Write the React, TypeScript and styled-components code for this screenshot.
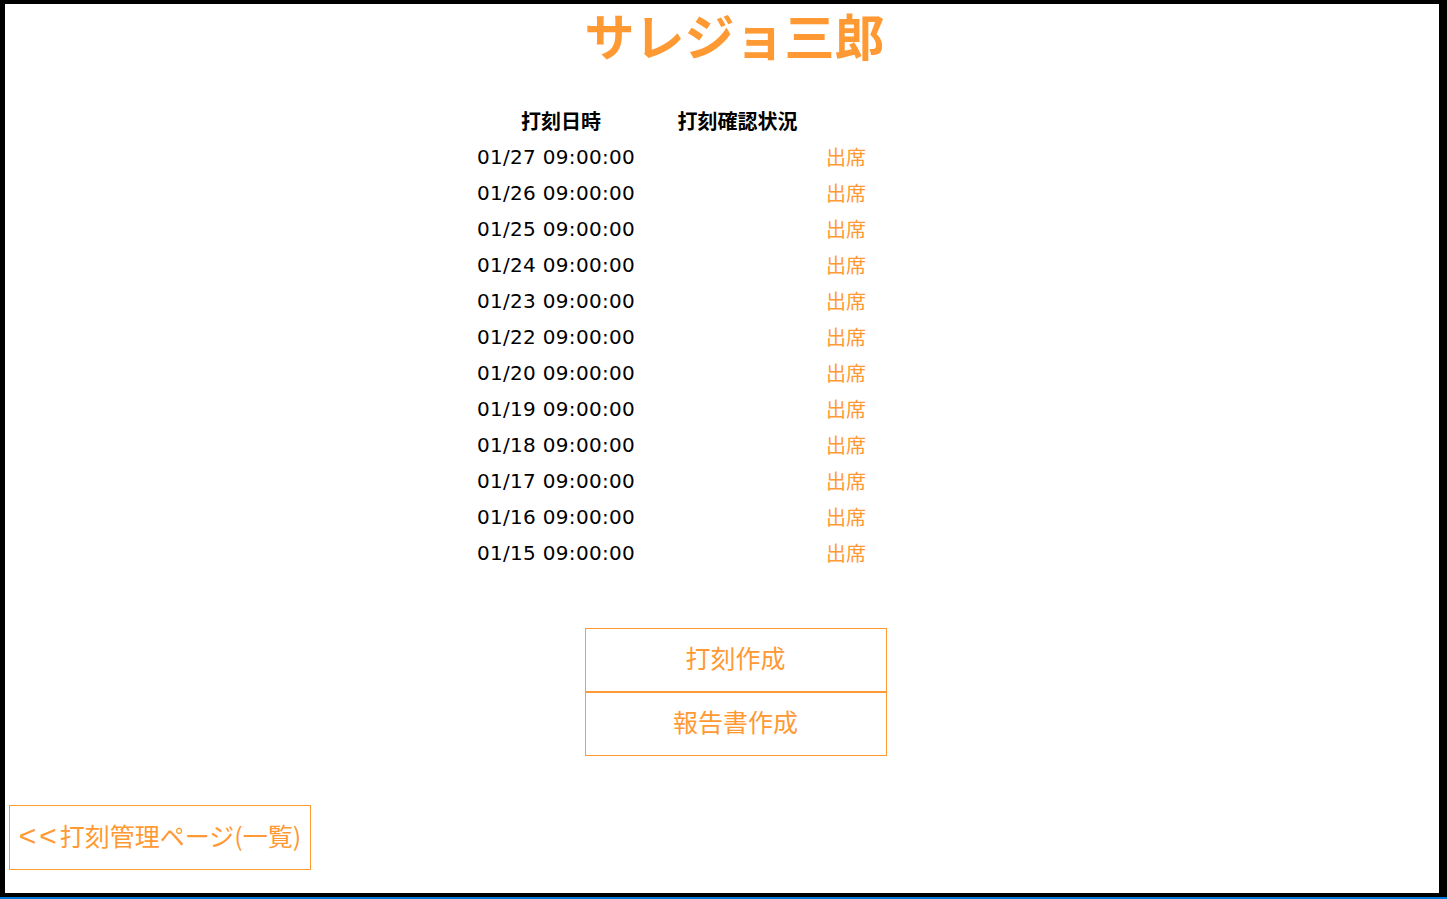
import React from "react";
import styled, { createGlobalStyle } from "styled-components";

const ORANGE = "#ff9933";

const Global = createGlobalStyle`
  html, body { margin: 0; padding: 0; background: #000; }
  body { font-family: "DejaVu Sans", "Noto Sans CJK JP", sans-serif; overflow: hidden; }
`;

const Frame = styled.div`
  width: 1447px;
  height: 899px;
  box-sizing: border-box;
  background: #000;
  display: flex;
  flex-direction: column;
  border-bottom: 2px solid #0078d7;
`;

const Screen = styled.div`
  flex: 1;
  margin: 4px 8px 4px 5px;
  background: #fff;
  display: flex;
  flex-direction: column;
`;

const Main = styled.main`
  display: flex;
  flex-direction: column;
  align-items: center;
  padding-left: 27px;
`;

const Title = styled.h1`
  margin: 0;
  height: 66px;
  line-height: 60px;
  font-family: "Noto Sans CJK JP", sans-serif;
  font-weight: 700;
  font-size: 50px;
  color: ${ORANGE};
  padding-right: 2px;
`;

const Table = styled.div`
  margin-top: 33px;
  display: grid;
  grid-template-columns: 188px 221px 128px;
  grid-auto-rows: 36px;
  align-items: center;
`;

const Head = styled.div<{ $padRight?: number }>`
  font-family: "Noto Sans CJK JP", sans-serif;
  font-weight: 700;
  font-size: 20px;
  color: #000;
  text-align: center;
  padding-right: ${(p) => p.$padRight ?? 0}px;
  padding-bottom: 2px;
`;

const DateCell = styled.div`
  font-size: 20px;
  letter-spacing: 0.3px;
  color: #000;
  padding-left: 10px;
`;

const StatusCell = styled.div`
  font-family: "Noto Sans CJK JP", sans-serif;
  font-size: 20px;
  color: ${ORANGE};
  text-align: right;
  padding-right: 10px;
  padding-bottom: 2px;
`;

const Spacer = styled.div``;

const ButtonStack = styled.div`
  margin-top: 57px;
  display: flex;
  flex-direction: column;
`;

const ActionButton = styled.button`
  width: 302px;
  height: 64px;
  box-sizing: border-box;
  border: 1px solid ${ORANGE};
  background: #fff;
  color: ${ORANGE};
  font-family: "Noto Sans CJK JP", sans-serif;
  font-size: 25px;
  padding: 0 0 7px;
  cursor: pointer;
`;

const BackButton = styled(ActionButton)`
  margin: 49px 0 0 4px;
  height: 65px;
  align-self: flex-start;
  padding: 0 0 6px 0;
`;

const Arrows = styled.span`
  font-family: "Liberation Sans", sans-serif;
  font-size: 30px;
  line-height: 1;
  letter-spacing: 3px;
`;

const dates = [
  "01/27", "01/26", "01/25", "01/24", "01/23", "01/22",
  "01/20", "01/19", "01/18", "01/17", "01/16", "01/15",
];

export default function App() {
  return (
    <>
      <Global />
      <Frame>
        <Screen>
          <Main>
            <Title>サレジョ三郎</Title>
            <Table>
              <Head>打刻日時</Head>
              <Head $padRight={56}>打刻確認状況</Head>
              <Spacer />
              {dates.map((d) => (
                <React.Fragment key={d}>
                  <DateCell>{d} 09:00:00</DateCell>
                  <StatusCell>出席</StatusCell>
                  <Spacer />
                </React.Fragment>
              ))}
            </Table>
            <ButtonStack>
              <ActionButton>打刻作成</ActionButton>
              <ActionButton>報告書作成</ActionButton>
            </ButtonStack>
          </Main>
          <BackButton>
            <Arrows>&lt;&lt;</Arrows>打刻管理ページ(一覧)
          </BackButton>
        </Screen>
      </Frame>
    </>
  );
}
